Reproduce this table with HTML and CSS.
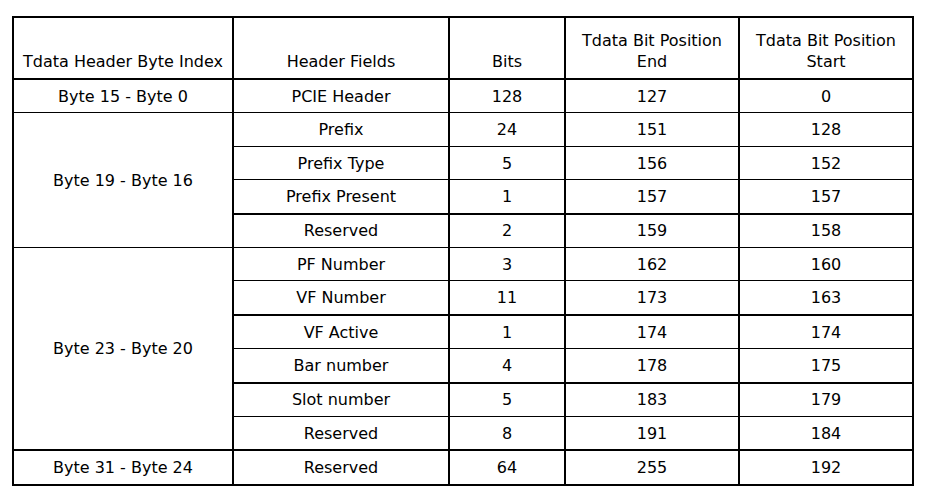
FILE: index.html
```html
<!DOCTYPE html>
<html>
<head>
<meta charset="utf-8">
<link rel="stylesheet" href="styles.css">
</head>
<body>
<table class="tbl">
  <colgroup>
    <col class="c1"><col class="c2"><col class="c3"><col class="c4"><col class="c5">
  </colgroup>
  <thead>
    <tr class="head thick">
      <th>Tdata Header Byte Index</th>
      <th>Header Fields</th>
      <th>Bits</th>
      <th>Tdata Bit Position<br>End</th>
      <th>Tdata Bit Position<br>Start</th>
    </tr>
  </thead>
  <tbody>
    <tr><td>Byte 15 - Byte 0</td><td>PCIE Header</td><td>128</td><td>127</td><td>0</td></tr>
    <tr><td rowspan="4">Byte 19 - Byte 16</td><td>Prefix</td><td>24</td><td>151</td><td>128</td></tr>
    <tr><td>Prefix Type</td><td>5</td><td>156</td><td>152</td></tr>
    <tr class="thick"><td>Prefix Present</td><td>1</td><td>157</td><td>157</td></tr>
    <tr><td>Reserved</td><td>2</td><td>159</td><td>158</td></tr>
    <tr><td rowspan="6" class="thick-b">Byte 23 - Byte 20</td><td>PF Number</td><td>3</td><td>162</td><td>160</td></tr>
    <tr class="thick"><td>VF Number</td><td>11</td><td>173</td><td>163</td></tr>
    <tr><td>VF Active</td><td>1</td><td>174</td><td>174</td></tr>
    <tr class="thick"><td>Bar number</td><td>4</td><td>178</td><td>175</td></tr>
    <tr><td>Slot number</td><td>5</td><td>183</td><td>179</td></tr>
    <tr class="thick"><td>Reserved</td><td>8</td><td>191</td><td>184</td></tr>
    <tr class="thick"><td>Byte 31 - Byte 24</td><td>Reserved</td><td>64</td><td>255</td><td>192</td></tr>
  </tbody>
</table>
</body>
</html>
```

FILE: styles.css
```css
html, body {
  margin: 0;
  padding: 0;
  background: #fff;
}
body {
  padding: 16px 0 0 12px;
  font-family: "DejaVu Sans", sans-serif;
  font-size: 16px;
  color: #000;
}
.tbl {
  border-collapse: collapse;
  table-layout: fixed;
  width: 900px;
  border: 2px solid #000;
}
.c1 { width: 220px; }
.c2 { width: 216px; }
.c3 { width: 116px; }
.c4 { width: 174px; }
.c5 { width: 174px; }
.tbl th, .tbl td {
  border-left: 2px solid #000;
  border-right: 2px solid #000;
  border-top: 1px solid #000;
  border-bottom: 1px solid #000;
  text-align: center;
  padding: 0;
  font-weight: normal;
  line-height: 21px;
}
.tbl td {
  height: 32.42px;
  vertical-align: middle;
}
.tbl th {
  height: 54px;
  vertical-align: bottom;
  padding-bottom: 6px;
}
.tbl tr.thick > td, .tbl tr.thick > th, .tbl td.thick-b {
  border-bottom: 2px solid #000;
}
```
